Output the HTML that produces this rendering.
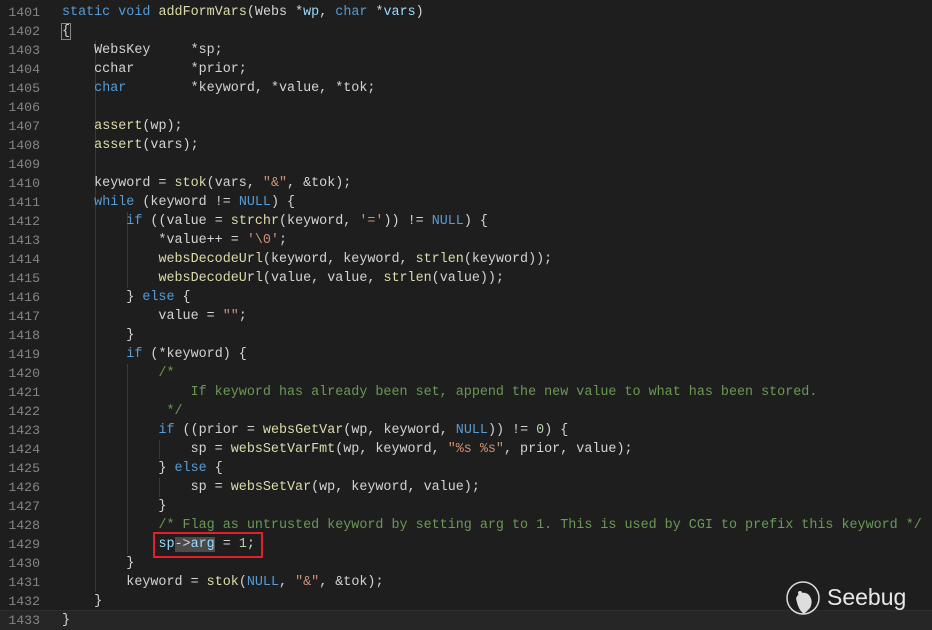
<!DOCTYPE html><html><head><style>
body{margin:0;width:932px;height:629px;background:#1e1e1e;overflow:hidden;position:relative;font-family:"Liberation Mono",monospace;}
.ln{position:absolute;left:0;top:3px;width:40px;text-align:right;color:#858585;font-size:13.2px;line-height:19px;white-space:pre}
.code{position:absolute;left:62px;top:3px;color:#d4d4d4;font-size:13.4px;line-height:19px;white-space:pre;margin:0;font-family:inherit}
.k{color:#569cd6}.f{color:#dcdcaa}.v{color:#9cdcfe}.s{color:#ce9178}.c{color:#6a9955}.n{color:#b5cea8}
.cur{position:absolute;left:0;top:610px;width:932px;height:19px;background:#262626;border-top:1px solid #2e2e2e}
.g{position:absolute;width:1px;background:#3a3a3a}
.sel{background:#4b4b4b}
.box{position:absolute;left:153px;top:532px;width:106px;height:22px;border:2px solid #e0202a}
</style></head><body>
<div class="cur"></div>
<div class="g" style="left:95px;top:41px;height:551px"></div>
<div class="g" style="left:127px;top:212px;height:76px"></div>
<div class="g" style="left:127px;top:364px;height:190px"></div>
<div class="g" style="left:159px;top:440px;height:19px"></div>
<div class="g" style="left:159px;top:478px;height:19px"></div>
<div class="ln">1401
1402
1403
1404
1405
1406
1407
1408
1409
1410
1411
1412
1413
1414
1415
1416
1417
1418
1419
1420
1421
1422
1423
1424
1425
1426
1427
1428
1429
1430
1431
1432
1433</div>
<pre class="code"><span class="k">static</span> <span class="k">void</span> <span class="f">addFormVars</span>(Webs *<span class="v">wp</span>, <span class="k">char</span> *<span class="v">vars</span>)
<span style="outline:1px solid #888">{</span>
    WebsKey     *sp;
    cchar       *prior;
    <span class="k">char</span>        *keyword, *value, *tok;

    <span class="f">assert</span>(wp);
    <span class="f">assert</span>(vars);

    keyword = <span class="f">stok</span>(vars, <span class="s">"&amp;"</span>, &amp;tok);
    <span class="k">while</span> (keyword != <span class="k">NULL</span>) {
        <span class="k">if</span> ((value = <span class="f">strchr</span>(keyword, <span class="s">'='</span>)) != <span class="k">NULL</span>) {
            *value++ = <span class="s">'\0'</span>;
            <span class="f">websDecodeUrl</span>(keyword, keyword, <span class="f">strlen</span>(keyword));
            <span class="f">websDecodeUrl</span>(value, value, <span class="f">strlen</span>(value));
        } <span class="k">else</span> {
            value = <span class="s">""</span>;
        }
        <span class="k">if</span> (*keyword) {
            <span class="c">/*</span>
<span class="c">                If keyword has already been set, append the new value to what has been stored.</span>
<span class="c">             */</span>
            <span class="k">if</span> ((prior = <span class="f">websGetVar</span>(wp, keyword, <span class="k">NULL</span>)) != <span class="n">0</span>) {
                sp = <span class="f">websSetVarFmt</span>(wp, keyword, <span class="s">"%s %s"</span>, prior, value);
            } <span class="k">else</span> {
                sp = <span class="f">websSetVar</span>(wp, keyword, value);
            }
            <span class="c">/* Flag as untrusted keyword by setting arg to 1. This is used by CGI to prefix this keyword */</span>
            <span class="v">sp</span><span class="sel">-&gt;<span class="v">arg</span></span> = <span class="n">1</span>;
        }
        keyword = <span class="f">stok</span>(<span class="k">NULL</span>, <span class="s">"&amp;"</span>, &amp;tok);
    }
}</pre>
<div class="box"></div>
<svg style="position:absolute;left:784px;top:580px" width="40" height="40" viewBox="0 0 40 40"><circle cx="19" cy="18" r="16" fill="none" stroke="#ddd" stroke-width="1.5"/><path d="M12 18 Q16 10 24 14 Q30 20 26 28 L20 34 Q14 30 12 18Z" fill="#ddd"/><circle cx="16" cy="13" r="2" fill="#ddd"/></svg>
<div style="position:absolute;left:827px;top:584px;color:#e8e8e8;font-family:'Liberation Sans',sans-serif;font-size:23px">Seebug</div>
</body></html>
